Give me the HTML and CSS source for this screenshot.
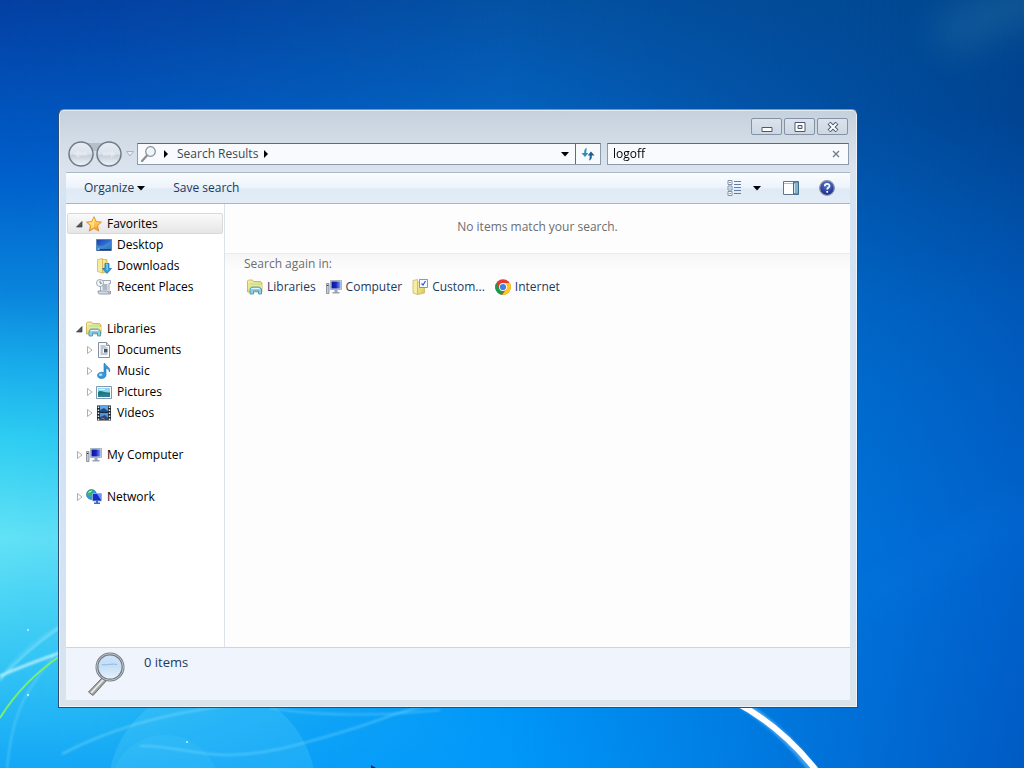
FILE: index.html
```
<!DOCTYPE html>
<html lang="en">
<head>
    <meta charset="UTF-8">
    <meta name="viewport" content="width=device-width, initial-scale=1.0">
    <title>Search Results</title>
    <link rel="stylesheet" href="styles.css">
</head>
<body>
    <!-- shared icons -->
    <svg class="defs" width="0" height="0" aria-hidden="true">
        <defs>
            <linearGradient id="gFolder" x1="0" y1="0" x2="1" y2="1"><stop offset="0" stop-color="#fbf3b4"/><stop offset="1" stop-color="#d9c24e"/></linearGradient>
            <linearGradient id="gBlue" x1="0" y1="0" x2="1" y2="1"><stop offset="0" stop-color="#1b3fa8"/><stop offset=".5" stop-color="#2f6fd0"/><stop offset="1" stop-color="#153c8c"/></linearGradient>
            <linearGradient id="gScreen" x1="0" y1="0" x2="1" y2="0"><stop offset="0" stop-color="#0a16a0"/><stop offset=".5" stop-color="#1524c0"/><stop offset="1" stop-color="#7f9bf0"/></linearGradient>
            <linearGradient id="gStar" x1="0" y1="0" x2="0" y2="1"><stop offset="0" stop-color="#fff07a"/><stop offset="1" stop-color="#f79a1c"/></linearGradient>
            <linearGradient id="gRound" x1="0" y1="0" x2="0" y2="1"><stop offset="0" stop-color="#e8edf2"/><stop offset=".5" stop-color="#dbe2ea"/><stop offset=".55" stop-color="#c6d0db"/><stop offset="1" stop-color="#eef4f9"/></linearGradient>
            <linearGradient id="gLens" x1="0" y1="0" x2="0" y2="1"><stop offset="0" stop-color="#cfe4fa"/><stop offset=".45" stop-color="#c4ddf5"/><stop offset="1" stop-color="#e9f4fd"/></linearGradient>
            <radialGradient id="gHelp" cx=".5" cy=".3" r=".7"><stop offset="0" stop-color="#5b7fdc"/><stop offset="1" stop-color="#17217f"/></radialGradient>
        </defs>
        <symbol id="open" viewBox="0 0 8 8"><path d="M7 1.500v5.500H1.500z" fill="#595959" stroke="#262626" stroke-width=".6"/></symbol>
        <symbol id="closed" viewBox="0 0 8 8"><path d="M2.500.5v7L7 4z" fill="#fff" stroke="#a6a6a6" stroke-width=".9"/></symbol>
        <symbol id="down" viewBox="0 0 8 8"><path d="M0 2h8L4 6.500z"/></symbol>
        <symbol id="right" viewBox="0 0 8 8"><path d="M2 0v8l4-4z"/></symbol>
        <symbol id="star" viewBox="0 0 16 16"><path d="M8 .7l2.200 4.900 5.300.5-4 3.600 1.200 5.400L8 12.300l-4.700 2.800 1.200-5.400-4-3.600 5.300-.5z" fill="url(#gStar)" stroke="#d9822b" stroke-width=".8"/><path d="M8 2.500v8.800L4.600 13l.9-3.800L2.500 6.700l3.900-.4z" fill="#fff6a8" opacity=".6"/></symbol>
        <symbol id="desktop" viewBox="0 0 16 16"><path d="M.5 2.500h15v11H.5z" fill="url(#gBlue)" stroke="#5c87b8"/><path d="M1 12V8c5 2.500 8 0 14-4v8z" fill="#58a5e8" opacity=".5"/><path d="M1 12h14v1.500H1z" fill="#243a60"/><path d="M1.500 11.500h2v1.500h-2z" fill="#67d2f7"/></symbol>
        <symbol id="downloads" viewBox="0 0 16 16"><path d="M1.500 1.500l5-1v14.500l-5-1.500z" fill="#f6eaa0" stroke="#c9b04c" stroke-width=".7"/><path d="M6.500 1.500h4.500v12.500l-4.500 1z" fill="url(#gFolder)" stroke="#c9b04c" stroke-width=".7"/><path d="M9 5.500h4v5h2.500l-4.500 5-4.500-5H9z" fill="#2e9fe2" stroke="#176aa8" stroke-width=".7"/><path d="M9.800 6.200h1.300v6" stroke="#a4defc" fill="none"/></symbol>
        <symbol id="recent" viewBox="0 0 16 16"><path d="M5 1.500h9.500v3H13v9H4.500V5z" fill="#f3f5f7" stroke="#8393a4" stroke-width=".8"/><path d="M2 12h9.500c0 2 2.500 2 3 0v3H3.500C2.500 15 2 13.500 2 12z" fill="#d5dce3" stroke="#7b8b9c" stroke-width=".8"/><path d="M6.500 6h5M6.500 8h5M6.500 10h5" stroke="#6b7c90"/><circle cx="4" cy="4" r="3.500" fill="#f7fafc" stroke="#91a0ae" stroke-width=".9"/><path d="M4 1.800V4.200h2" fill="none" stroke="#546272" stroke-width=".8"/></symbol>
        <symbol id="libraries" viewBox="0 0 16 16"><path d="M.5 13V2l1-1h4l1 1.500h7l1.500 1.500v9z" fill="url(#gFolder)" stroke="#c1ac49" stroke-width=".8"/><path d="M2.500 4h11v6h-11z" fill="#c4e8a0"/><path d="M1 6h14v3H1z" fill="#f3e783"/><path d="M3 15V10.500l1.500-2.500h8l2 2.500V15h-3v-3h-5v3z" fill="#8bd0ea" stroke="#3f8fb8" stroke-width=".8"/><path d="M4.500 9.500h8" stroke="#dff6ff"/></symbol>
        <symbol id="documents" viewBox="0 0 16 16"><path d="M2.500.5h8l3 3v12h-11z" fill="#fafbfc" stroke="#78838f" stroke-width=".9"/><path d="M10.500.5v3h3" fill="#d2dae2" stroke="#78838f" stroke-width=".8"/><path d="M4.500 4h5M4.500 6h7M4.500 8h2.500M4.500 10h2.500M4.500 12h7" stroke="#7c8b9c" stroke-width=".9"/><path d="M8 7h3.500v3.500H8z" fill="#40536a"/></symbol>
        <symbol id="music" viewBox="0 0 16 16"><path d="M9 .5c.5 3 6 3.500 4.500 8.500-.4-2.500-2-3.500-3.500-3.700V12c0 2-1.800 3.500-4.500 3.500S1.500 14 1.500 12.200C1.500 10 5 8.500 8 9.700V.5z" fill="#3199dd" stroke="#1c6ba9" stroke-width=".6"/><ellipse cx="4.600" cy="11.800" rx="1.800" ry="1.200" fill="#a8e1ff"/></symbol>
        <symbol id="pictures" viewBox="0 0 16 16"><path d="M.5 2.500h15v12H.5z" fill="#f8fafc" stroke="#7f98ae"/><path d="M2 4h12v9H2z" fill="#8fd5f2"/><path d="M2 8c3-2.500 5 1 12 .5V13H2z" fill="#1b7b6b"/><path d="M2 11c4-1.500 8-1.500 12-.5V13H2z" fill="#2b7d98"/><path d="M3 5.500h6" stroke="#e7f8ff"/></symbol>
        <symbol id="videos" viewBox="0 0 16 16"><path d="M1 .5h14v15H1z" fill="#1c2530"/><path d="M4 1h8v6H4z" fill="#5ba8ea"/><path d="M4 8h8v7H4z" fill="#4f96dc"/><path d="M4 5l4-2 4 3v1H4zM4 12l5-2 3 3v2H4z" fill="#1d4c88"/><path d="M5.500 13l3 1" stroke="#e06a3a"/><path d="M2.500 1.500v14M13.500 1.500v14" stroke="#e6edf3" stroke-width="1.500" stroke-dasharray="1.500 1.500"/></symbol>
        <symbol id="computer" viewBox="0 0 16 16"><path d="M4.500 1.500h11v9h-11z" fill="#d8dde4" stroke="#9ba4b0" stroke-width=".8"/><path d="M5.500 2.500h9v7h-9z" fill="url(#gScreen)"/><path d="M8.500 11h3v2h2v1.500h-7V13h2z" fill="#9aa3b0"/><path d="M.5 4.500h2.500v10H.5z" fill="#c5ccd5" stroke="#6e7886" stroke-width=".7"/><path d="M1 6.500h1.500" stroke="#333d4d"/></symbol>
        <symbol id="network" viewBox="0 0 16 16"><circle cx="5.500" cy="5.500" r="5" fill="#2e9ed4" stroke="#1d6c92" stroke-width=".6"/><path d="M2 3c2-3 5-2 5-1L5.500 4 6 6 3.500 7 1 5.500zM6 8l3-1v3H6.500z" fill="#3fb466"/><path d="M2.500 3.500l3-1.500" stroke="#e3fff1"/><path d="M6.500 4.500h9v7.500h-9z" fill="#1530c8" stroke="#a5b8d8" stroke-width=".8"/><path d="M11 5h4v6z" fill="#6d93f5"/><path d="M10 12h2v1.500h2V15H8v-1.500h2z" fill="#2d70cf"/></symbol>
        <symbol id="custom" viewBox="0 0 16 16"><path d="M1 1.500l4.500-1v15L1 14z" fill="#f7eda6" stroke="#c9b04c" stroke-width=".7"/><path d="M5.500 3h7v11l-7 1.500z" fill="url(#gFolder)" stroke="#c9b04c" stroke-width=".7"/><path d="M7.500.5h8v8h-8z" fill="#f7faff" stroke="#68809e" stroke-width=".8"/><path d="M9.500 4.500L11 6l2.500-4" fill="none" stroke="#2d52c9" stroke-width="1.100"/></symbol>
        <symbol id="chrome" viewBox="0 0 16 16"><circle cx="8" cy="8" r="7.800" fill="#e33b2e"/><path d="M1.250 4.100L4.620 9.950 8 11.900 7.200 15.800A7.800 7.800 0 0 1 1.250 4.100z" fill="#1c9b4b"/><path d="M8 4.100h6.750A7.800 7.800 0 0 1 7.200 15.800l4.180-5.850z" fill="#fbc91a"/><circle cx="8" cy="8" r="3.900" fill="#fff"/><circle cx="8" cy="8" r="3.100" fill="#3f7fe8"/></symbol>
        <symbol id="lens" viewBox="0 0 40 44"><path d="M15.500 25.500L1.500 40l4.500 3.500L19.500 28.500z" fill="#a3a5a3" stroke="#6a6c6c"/><path d="M16.500 27.500L4 41" stroke="#eeefec" stroke-width="1.800"/><circle cx="23" cy="15" r="13" fill="url(#gLens)" stroke="#737a83" stroke-width="3"/><circle cx="23" cy="15" r="13.300" fill="none" stroke="#bfc5cb"/><path d="M15 12.500c4 1.200 8-1.200 15 0" fill="none" stroke="#8bbbe6"/></symbol>
        <symbol id="glass" viewBox="0 0 16 16"><path d="M6 9.500L1 15" stroke="#8b8d90" stroke-width="2.200" stroke-linecap="round"/><circle cx="9.500" cy="5.500" r="4.800" fill="#eef5fb" stroke="#858d97" stroke-width="1.200"/><path d="M7 4.500q1-2 3-2" fill="none" stroke="#fff"/></symbol>
    </svg>

    <div class="desktop">
        <svg class="wallpaper" viewBox="0 0 1024 768" preserveAspectRatio="none" aria-hidden="true">
            <defs>
                <filter id="soft" x="-20%" y="-50%" width="140%" height="200%"><feGaussianBlur stdDeviation="1"/></filter>
                <filter id="softer" filterUnits="userSpaceOnUse" x="700" y="-150" width="500" height="1000"><feGaussianBlur stdDeviation="18"/></filter>
                <linearGradient id="skyLeft" x1="0" y1="0" x2="0" y2="1">
                    <stop offset="0" stop-color="#0440a2"/><stop offset=".23" stop-color="#0060cc"/><stop offset=".38" stop-color="#0a85dc"/><stop offset=".48" stop-color="#1aaeec"/><stop offset=".57" stop-color="#2fcdf2"/><stop offset=".7" stop-color="#62e2f6"/><stop offset=".85" stop-color="#38c8f4"/><stop offset="1" stop-color="#14a8f6"/>
                </linearGradient>
                <linearGradient id="skyMiddle" x1="0" y1="0" x2="0" y2="1">
                    <stop offset="0" stop-color="#0452a4"/><stop offset=".15" stop-color="#0462be"/><stop offset=".5" stop-color="#0088e8"/><stop offset="1" stop-color="#0098fa"/>
                </linearGradient>
                <linearGradient id="skyRight" x1="0" y1="0" x2="0" y2="1">
                    <stop offset="0" stop-color="#00458c"/><stop offset=".15" stop-color="#004492"/><stop offset=".4" stop-color="#0058b8"/><stop offset=".7" stop-color="#0062cc"/><stop offset="1" stop-color="#005ac4"/>
                </linearGradient>
                <linearGradient id="fadeMiddle"><stop offset="0" stop-color="#000"/><stop offset=".1" stop-color="#111"/><stop offset=".5" stop-color="#fff"/></linearGradient>
                <linearGradient id="fadeRight"><stop offset=".5" stop-color="#000"/><stop offset="1" stop-color="#fff"/></linearGradient>
                <mask id="maskMiddle"><rect width="1024" height="768" fill="url(#fadeMiddle)"/></mask>
                <mask id="maskRight"><rect width="1024" height="768" fill="url(#fadeRight)"/></mask>
            </defs>
            <rect width="1024" height="768" fill="url(#skyLeft)"/>
            <rect width="1024" height="768" fill="url(#skyMiddle)" mask="url(#maskMiddle)"/>
            <rect width="1024" height="768" fill="url(#skyRight)" mask="url(#maskRight)"/>
            <g fill="none" filter="url(#soft)">
                <path d="M0 676Q25 665 62 652" stroke="#d5faff" stroke-width="2.500" opacity=".8"/>
                <path d="M0 680Q25 650 62 626" stroke="#b5f2ff" stroke-width="1.500" opacity=".6"/>
                <path d="M0 682Q12 652 66 622" stroke="#b5f2ff" opacity=".4"/>
                <path d="M7 768C12 715 24 690 60 650" stroke="#8be3ff" stroke-width="2" opacity=".35"/>
                <path d="M62 754Q130 718 225 706" stroke="#9ceaff" stroke-width="2" opacity=".4"/>
                <path d="M140 746C190 745 210 768 300 744S380 716 425 706" stroke="#8be3ff" stroke-width="2" opacity=".4"/>
                <path d="M270 708Q340 720 440 710" stroke="#9ceaff" stroke-width="2" opacity=".3"/>
            </g>
            <path d="M0 718Q22 682 60 656" fill="none" stroke="#7cf06a" stroke-width="2"/>
            <circle cx="212" cy="790" r="104" fill="#8af0ff" opacity=".15"/>
            <circle cx="165" cy="790" r="55" fill="#8af0ff" opacity=".07"/>
            <path d="M728 696Q780 724 816 774" fill="none" stroke="#7cc9ff" stroke-width="9" opacity=".5" filter="url(#soft)"/>
            <path d="M732 700Q782 726 819 774" fill="none" stroke="#fff" stroke-width="6"/>
            <path d="M850 602Q930 580 1024 500" fill="none" stroke="#2a9aff" stroke-width="14" opacity=".15" filter="url(#softer)"/>
            <path d="M940 40Q980 15 1060 -10" fill="none" stroke="#4ea0b8" stroke-width="40" opacity=".22" filter="url(#softer)"/>
            <g fill="#b9f6ff"><circle cx="28" cy="630" r="1"/><circle cx="28" cy="695" r="1.200"/><circle cx="187" cy="742" r="1"/></g>
            <path d="M371 765v3h5z" fill="#0a2a6c"/>
        </svg>

        <main class="window">
            <div class="title-bar">
                <button class="caption" aria-label="Minimize"><svg width="12" height="10"><path d="M1 5.500h10v4H1z" fill="#fff" stroke="#4d5870"/></svg></button>
                <button class="caption" aria-label="Restore"><svg width="12" height="10"><path d="M1 .5h10v9H1z" fill="#fff" stroke="#4d5870"/><path d="M4 3.500h4v3H4z" fill="#dde4ed" stroke="#4d5870"/></svg></button>
                <button class="caption" aria-label="Close"><svg width="12" height="10"><path d="M2 1l8 8M10 1L2 9" stroke="#4d5870" stroke-width="4"/><path d="M2.500 1.500l7 7M9.500 1.500l-7 7" stroke="#fff" stroke-width="2"/></svg></button>
            </div>

            <div class="nav-bar">
                <div class="travel">
                    <svg class="travel-plate" width="54" height="28" aria-hidden="true">
                        <path d="M14 2h28v4q-14 8-28 0z" fill="#b3bfcb"/>
                    </svg>
                    <button class="round" aria-label="Back"><svg width="26" height="26"><circle cx="13" cy="13" r="12" fill="url(#gRound)" stroke="#707a87" stroke-width="1.500"/><path d="M6 13l5-4v2.500h8v3h-8V17z" fill="#e9eef4" opacity=".7"/></svg></button>
                    <button class="round" aria-label="Forward"><svg width="26" height="26"><circle cx="13" cy="13" r="12" fill="url(#gRound)" stroke="#707a87" stroke-width="1.500"/><path d="M20 13l-5-4v2.500H7v3h8V17z" fill="#e9eef4" opacity=".7"/></svg></button>
                    <button class="recent-pages" aria-label="Recent pages"><svg width="8" height="8"><path d="M.5 1.500h7L4 6z" fill="#e8eef5" stroke="#a9b5c2"/></svg></button>
                </div>
                <div class="address">
                    <svg width="16" height="16" aria-hidden="true"><use href="#glass"/></svg>
                    <svg width="8" height="8" aria-hidden="true"><use href="#right"/></svg>
                    <a href="#">Search Results</a>
                    <svg width="8" height="8" aria-hidden="true"><use href="#right"/></svg>
                    <button class="previous" aria-label="Previous locations"><svg width="8" height="8"><use href="#down"/></svg></button>
                    <button class="refresh" aria-label="Refresh"><svg width="14" height="14"><path d="M6 1Q3 1.500 3.200 6H.5L4 10l3.300-4H5.200Q5 3 6 1z" fill="#2a8fb0"/><path d="M8 13.500q3-.5 2.800-5h2.700L10 4.500 6.700 8.500h2.100q.2 3-.8 5z" fill="#1f5f8f"/></svg></button>
                </div>
                <div class="search">
                    <input type="text" value="logoff" aria-label="Search">
                    <button class="clear" aria-label="Clear search"><svg width="8" height="8"><path d="M1 1l6 6M7 1L1 7" stroke="#6e7c8c" stroke-width="1.300"/></svg></button>
                </div>
            </div>

            <div class="tool-bar">
                <button>Organize <svg width="8" height="8"><use href="#down"/></svg></button>
                <button>Save search</button>
                <div class="view-tools">
                    <button aria-label="Change your view"><svg width="16" height="16"><path d="M1 .5h4v4H1zM1 6h4v4H1zM1 11.500h4v4H1z" fill="#fff" stroke="#8090a8"/><path d="M2.500 2.500h1M2.500 8h1M2.500 13.500h1" stroke="#2b4380"/><path d="M7 1.500h7M7 4.500h7M7 7.500h7M7 10.500h7M7 13.500h7" stroke="#5f7fa8"/></svg></button>
                    <button aria-label="More options"><svg width="8" height="8"><use href="#down"/></svg></button>
                    <button class="pane" aria-label="Show the preview pane"><svg width="16" height="16"><path d="M.5 1.500h15v13H.5z" fill="#fff" stroke="#607590"/><path d="M1 3.500h14" stroke="#a9bed0"/><path d="M10.500 2h5v12h-5z" fill="#7fb4d0" stroke="#456b8c"/><path d="M11.500 4v9" stroke="#c8e6f2"/></svg></button>
                    <button class="help" aria-label="Get help"><svg width="16" height="16"><circle cx="8" cy="8" r="7.300" fill="url(#gHelp)" stroke="#8791a8" stroke-width="1.300"/><path d="M5.800 6.200c0-3 4.700-2.900 4.700-.3 0 1.600-2.300 1.600-2.300 3.600M8.200 11v1.800" fill="none" stroke="#fff" stroke-width="1.700"/></svg></button>
                </div>
            </div>

            <div class="panes">
                <nav class="tree">
                    <ul>
                        <li>
                            <a class="selected" href="#"><svg class="arrow"><use href="#open"/></svg><svg class="icon"><use href="#star"/></svg>Favorites</a>
                            <ul>
                                <li><a href="#"><span class="arrow"></span><svg class="icon"><use href="#desktop"/></svg>Desktop</a></li>
                                <li><a href="#"><span class="arrow"></span><svg class="icon"><use href="#downloads"/></svg>Downloads</a></li>
                                <li><a href="#"><span class="arrow"></span><svg class="icon"><use href="#recent"/></svg>Recent Places</a></li>
                            </ul>
                        </li>
                        <li>
                            <a href="#"><svg class="arrow"><use href="#open"/></svg><svg class="icon"><use href="#libraries"/></svg>Libraries</a>
                            <ul>
                                <li><a href="#"><svg class="arrow"><use href="#closed"/></svg><svg class="icon"><use href="#documents"/></svg>Documents</a></li>
                                <li><a href="#"><svg class="arrow"><use href="#closed"/></svg><svg class="icon"><use href="#music"/></svg>Music</a></li>
                                <li><a href="#"><svg class="arrow"><use href="#closed"/></svg><svg class="icon"><use href="#pictures"/></svg>Pictures</a></li>
                                <li><a href="#"><svg class="arrow"><use href="#closed"/></svg><svg class="icon"><use href="#videos"/></svg>Videos</a></li>
                            </ul>
                        </li>
                        <li><a href="#"><svg class="arrow"><use href="#closed"/></svg><svg class="icon"><use href="#computer"/></svg>My Computer</a></li>
                        <li><a href="#"><svg class="arrow"><use href="#closed"/></svg><svg class="icon"><use href="#network"/></svg>Network</a></li>
                    </ul>
                </nav>

                <section class="results">
                    <p class="empty">No items match your search.</p>
                    <div class="again">
                        <p>Search again in:</p>
                        <div class="places">
                            <a href="#"><svg class="icon"><use href="#libraries"/></svg>Libraries</a>
                            <a href="#"><svg class="icon"><use href="#computer"/></svg>Computer</a>
                            <a href="#"><svg class="icon"><use href="#custom"/></svg>Custom...</a>
                            <a href="#"><svg class="icon"><use href="#chrome"/></svg>Internet</a>
                        </div>
                    </div>
                </section>
            </div>

            <footer class="details">
                <svg width="40" height="44" aria-hidden="true"><use href="#lens"/></svg>
                <p>0 items</p>
            </footer>
        </main>
    </div>
</body>
</html>
```
FILE: styles.css
```
* {
    box-sizing: border-box;
}
body {
    margin: 0;
    font-family: "Open Sans", "Noto Sans", sans-serif;
    font-size: 12px;
    line-height: 20px;
    color: #000;
}
ul, p {
    margin: 0;
    padding: 0;
    list-style: none;
}
a {
    color: inherit;
    text-decoration: none;
}
button {
    display: flex;
    align-items: center;
    justify-content: center;
    padding: 0;
    border: 0;
    background: none;
    font: inherit;
    color: inherit;
}
svg {
    display: block;
    flex: none;
}
.defs {
    position: absolute;
}
.desktop {
    position: relative;
    display: flex;
    min-height: 100vh;
    padding: 109px 166px 60px 58px;
    background: #0068d8;
    overflow: hidden;
}
.wallpaper {
    position: absolute;
    inset: 0;
    width: 100%;
    height: 100%;
}

/* window frame */
.window {
    position: relative;
    display: flex;
    flex: 1;
    flex-direction: column;
    min-width: 0;
    padding: 0 7px 7px;
    border: 1px solid #2c4c74;
    border-top-color: #8493a6;
    border-radius: 6px 6px 0 0;
    background: linear-gradient(180deg, #c5d0dd 0, #d0dae5 24px, #dbe4ee 60px, #d3e3f3 100px, #d3e3f3 80%, #dae3eb 100%);
    box-shadow: inset 0 0 0 1px rgba(255, 255, 255, 0.6);
}
.title-bar {
    display: flex;
    justify-content: flex-end;
    gap: 2px;
    padding: 8px 2px 5px;
}
.caption {
    width: 31px;
    height: 17px;
    border: 1px solid #8592a5;
    border-radius: 2px;
    background: linear-gradient(#dbe3ec, #cdd8e4);
}
.nav-bar {
    display: flex;
    align-items: center;
    height: 28px;
    margin-bottom: 4px;
    padding-right: 1px;
}
.travel {
    position: relative;
    display: flex;
    align-items: center;
    gap: 2px;
    padding: 0 1px 0 2px;
}
.travel-plate {
    position: absolute;
    left: 2px;
    top: 0;
}
.round {
    position: relative;
}
.recent-pages {
    width: 12px;
}
.address, .search {
    display: flex;
    align-items: center;
    height: 22px;
    border: 1px solid #8c9bab;
    border-top-color: #5c6c7d;
    background: #f8fafd;
}
.address {
    flex: 1;
    gap: 7px;
    margin-right: 6px;
    padding-left: 3px;
    color: #000;
}
.address svg + svg {
    margin-left: -2px;
}
.address a {
    color: #3c4654;
}
.address a + svg {
    margin-left: -3px;
}
.previous {
    width: 20px;
    height: 20px;
    margin-left: auto;
}
.refresh {
    width: 25px;
    height: 20px;
    margin-left: -7px;
    border-left: 1px solid #5c6c7d;
}
.search {
    flex: 0 1 242px;
}
.search input {
    flex: 1;
    min-width: 0;
    padding: 0 5px;
    border: 0;
    outline: 0;
    background: none;
    font: inherit;
}
.clear {
    width: 24px;
    height: 20px;
}

/* command bar */
.tool-bar {
    display: flex;
    align-items: center;
    gap: 28px;
    height: 32px;
    padding: 0 15px 0 18px;
    border-top: 1px solid #a9b8c8;
    border-bottom: 1px solid #a5b5ca;
    background: linear-gradient(#fbfdff 0%, #edf4fc 45%, #dfeaf6 55%, #e2edf8 100%);
    color: #1e395b;
}
.tool-bar button {
    gap: 3px;
}
.view-tools {
    display: flex;
    align-items: center;
    gap: 10px;
    margin-left: auto;
    color: #1a2738;
}
.view-tools .pane,
.view-tools .help {
    margin-left: 10px;
}
.view-tools .pane {
    margin-left: 12px;
}

.panes {
    display: flex;
    flex: 1;
    background: #fdfdfe;
}
.tree {
    flex: none;
    width: 159px;
    padding: 9px 1px;
    border-right: 1px solid #dbe2ea;
    background: #fff;
}
.tree > ul {
    display: flex;
    flex-direction: column;
    gap: 21px;
}
.tree a {
    display: flex;
    align-items: center;
    height: 21px;
    padding-left: 7px;
    border: 1px solid transparent;
    border-radius: 2px;
}
.tree li li a {
    padding-left: 17px;
}
.tree .selected {
    border-color: #d9d9d9;
    background: linear-gradient(#fafafa, #e6e6e6);
}
.arrow {
    width: 8px;
    height: 8px;
    margin-right: 3px;
}
.icon {
    width: 16px;
    height: 16px;
    margin-right: 4px;
}
.tree .icon {
    margin-right: 5px;
}
.results {
    flex: 1;
    min-width: 0;
    color: #6d6d6d;
}
.empty {
    padding: 13px 0 16px;
    text-align: center;
}
.again {
    padding: 0 19px;
    border-top: 1px solid #ececee;
    background: linear-gradient(#f6f6f7 0, #fdfdfe 16px);
}
.places {
    display: flex;
    gap: 10px;
    padding: 3px;
    color: #1e395b;
}
.places a {
    display: flex;
    align-items: center;
}

/* details pane */
.details {
    display: flex;
    gap: 17px;
    height: 53px;
    padding: 4px 21px;
    border-top: 1px solid #cdd5df;
    background: #f0f4fd;
    color: #1e395b;
}
.details p {
    font-size: 13px;
}
```
